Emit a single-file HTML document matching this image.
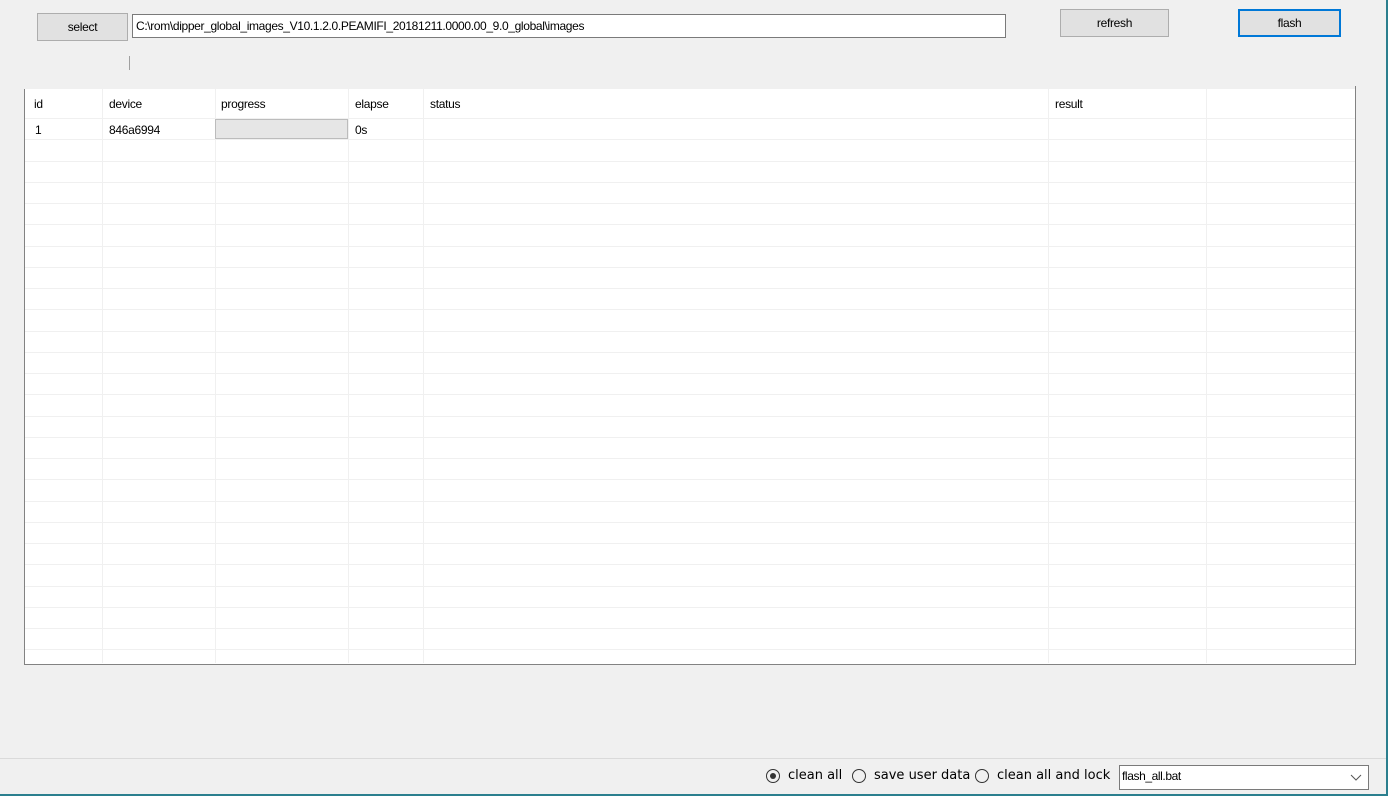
<!DOCTYPE html>
<html><head><style>
body{margin:0;width:1388px;height:796px;background:#f0f0f0;position:relative;overflow:hidden;font-family:"Liberation Sans",sans-serif;font-size:12px;color:#000}
.a{position:absolute}
.btn{position:absolute;background:#e1e1e1;border:1px solid #adadad;box-sizing:border-box;text-align:center;font-size:12px;letter-spacing:-0.3px}
.hl{position:absolute;left:25px;width:1330px;height:1px;background:#f0f0f0}
.vl{position:absolute;top:89px;height:574px;width:1px;background:#f0f0f0}
.t{position:absolute;font-size:12px;letter-spacing:-0.3px}
.r{position:absolute;top:768px;font-family:'DejaVu Sans',sans-serif;font-size:13px}
</style></head><body>
<div class="btn" style="left:37px;top:13px;width:91px;height:28px;line-height:26px">select</div>
<div class="a" style="left:132px;top:14px;width:874px;height:24px;background:#fff;border:1px solid #7a7a7a;box-sizing:border-box;padding-left:3px;line-height:22px;font-size:12px;letter-spacing:-0.35px">C:\rom\dipper_global_images_V10.1.2.0.PEAMIFI_20181211.0000.00_9.0_global\images</div>
<div class="btn" style="left:1060px;top:9px;width:109px;height:28px;line-height:26px">refresh</div>
<div class="btn" style="left:1238px;top:9px;width:103px;height:28px;line-height:26px;border:2px solid #0078d7;line-height:24px">flash</div>
<div class="a" style="left:129px;top:56px;width:1px;height:14px;background:#a0a0a0"></div>

<div class="a" style="left:24px;top:89px;width:1332px;height:576px;background:#fff;border-left:1px solid #828282;border-bottom:1px solid #828282;border-right:1px solid #828282;box-sizing:border-box"></div>
<div class="a" style="left:1355px;top:86px;width:1px;height:4px;background:#828282"></div>
<div class="vl" style="left:102px"></div><div class="vl" style="left:215px"></div><div class="vl" style="left:348px"></div><div class="vl" style="left:423px"></div><div class="vl" style="left:1048px"></div><div class="vl" style="left:1206px"></div>
<div id="rows"></div>
<div class="a" style="left:215px;top:119px;width:133px;height:20px;background:#e6e6e6;border:1px solid #bcbcbc;box-sizing:border-box"></div>
<div class="t" style="left:34px;top:97px">id</div>
<div class="t" style="left:109px;top:97px">device</div>
<div class="t" style="left:221px;top:97px">progress</div>
<div class="t" style="left:355px;top:97px">elapse</div>
<div class="t" style="left:430px;top:97px">status</div>
<div class="t" style="left:1055px;top:97px">result</div>
<div class="t" style="left:35px;top:123px">1</div>
<div class="t" style="left:109px;top:123px">846a6994</div>
<div class="t" style="left:355px;top:123px">0s</div>

<div class="a" style="left:0;top:758px;width:1388px;height:1px;background:#dadada"></div>
<div class="a" style="left:766px;top:769px;width:14px;height:14px;border:1px solid #333;border-radius:50%;box-sizing:border-box"></div>
<div class="a" style="left:770px;top:773px;width:6px;height:6px;background:#333;border-radius:50%"></div>
<div class="r" style="left:788px">clean all</div>
<div class="a" style="left:852px;top:769px;width:14px;height:14px;border:1px solid #333;border-radius:50%;box-sizing:border-box"></div>
<div class="r" style="left:874px">save user data</div>
<div class="a" style="left:975px;top:769px;width:14px;height:14px;border:1px solid #333;border-radius:50%;box-sizing:border-box"></div>
<div class="r" style="left:997px">clean all and lock</div>
<div class="a" style="left:1119px;top:765px;width:250px;height:25px;background:#fff;border:1px solid #7a7a7a;box-sizing:border-box;padding-left:2px;line-height:20px;letter-spacing:-0.4px">flash_all.bat</div>
<svg class="a" style="left:1350px;top:773px" width="12" height="8"><path d="M1 2 L6 7 L11 2" fill="none" stroke="#555" stroke-width="1"/></svg>
<div class="a" style="left:0;top:794px;width:1388px;height:2px;background:#2b7f8e"></div>
<div class="a" style="left:1386px;top:0;width:2px;height:796px;background:#2b7f8e"></div>
<script>
var h='';for(var i=0;i<26;i++){var y=Math.round(118+i*21.25);h+='<div class="hl" style="top:'+y+'px"></div>';}
document.getElementById('rows').innerHTML=h;
</script>
</body></html>
